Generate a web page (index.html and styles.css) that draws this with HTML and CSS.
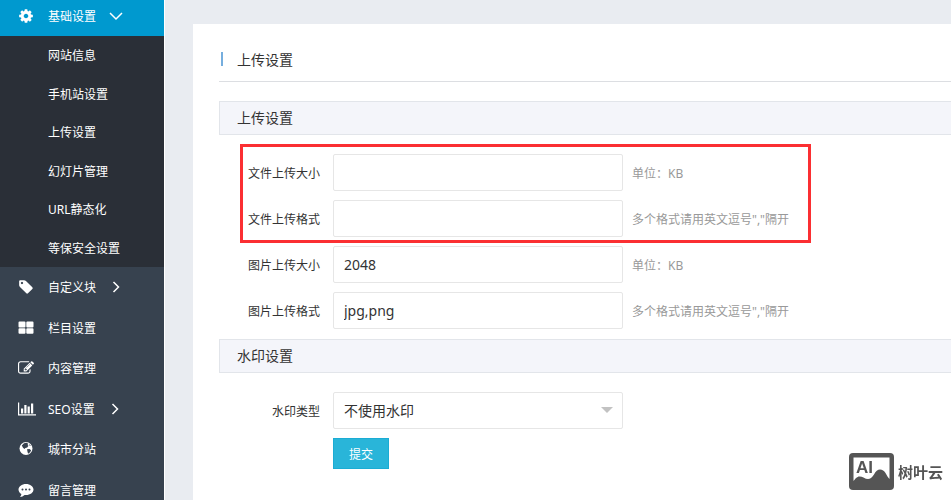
FILE: index.html
```html
<!DOCTYPE html>
<html lang="zh-CN">

<head>
    <meta charset="UTF-8">
    <meta name="viewport" content="width=device-width, initial-scale=1.0">
    <title>上传设置</title>
    <link rel="stylesheet" href="styles.css">
</head>

<body>
    <nav class="sidebar">
        <a class="menu-title active" href="#">
            <svg class="icon" viewBox="0 0 1792 1792"><path d="M1152 896q0-106-75-181t-181-75-181 75-75 181 75 181 181 75 181-75 75-181zm512-109v222q0 12-8 23t-20 13l-185 28q-19 54-39 91 35 50 107 138 10 12 10 25t-9 23q-27 37-99 108t-94 71q-12 0-26-9l-138-108q-44 23-91 38-16 136-29 186-7 28-36 28h-222q-14 0-24.500-8.500t-11.500-21.500l-28-184q-49-16-90-37l-141 107q-10 9-25 9-14 0-25-11-126-114-165-168-7-10-7-23 0-12 8-23 15-21 51-66.500t54-70.500q-27-50-41-99l-183-27q-13-2-21-12.500t-8-23.500v-222q0-12 8-23t19-13l186-28q14-46 39-92-40-57-107-138-10-12-10-24 0-10 9-23 26-36 98.500-107.500t94.500-71.500q13 0 26 10l138 107q44-23 91-38 16-136 29-186 7-28 36-28h222q14 0 24.500 8.500t11.500 21.500l28 184q49 16 90 37l142-107q9-9 24-9 13 0 25 10 129 119 165 170 7 8 7 22 0 12-8 23-15 21-51 66.500t-54 70.500q26 50 41 98l183 28q13 2 21 12.500t8 23.500z"/></svg>
            <span>基础设置</span>
            <svg class="arrow" viewBox="0 0 14 14"><path d="M1 4l6 6 6-6"/></svg>
        </a>
        <ul class="submenu">
            <li><a href="#">网站信息</a></li>
            <li><a href="#">手机站设置</a></li>
            <li><a href="#">上传设置</a></li>
            <li><a href="#">幻灯片管理</a></li>
            <li><a href="#">URL静态化</a></li>
            <li><a href="#">等保安全设置</a></li>
        </ul>
        <ul class="menu">
            <li>
                <a href="#">
                    <svg class="icon" viewBox="0 0 1792 1792"><path d="M576 448q0-53-37.500-90.500t-90.500-37.500-90.500 37.500-37.500 90.500 37.500 90.500 90.500 37.500 90.500-37.500 37.500-90.500zm1067 576q0 53-37 90l-491 492q-39 37-91 37-53 0-90-37l-715-716q-38-37-64.500-101t-26.500-117v-416q0-52 38-90t90-38h416q53 0 117 26.500t102 64.500l715 714q37 39 37 91z"/></svg>
                    <span>自定义块</span>
                    <svg class="arrow" viewBox="0 0 14 14"><path d="M4.500 2l5 5-5 5"/></svg>
                </a>
            </li>
            <li>
                <a href="#">
                    <svg class="icon" viewBox="0 0 16 16"><path d="M1.500 1.500h5q1 0 1 1v4q0 1-1 1h-5q-1 0-1-1v-4q0-1 1-1zM9.300 1.500h5.200q1 0 1 1v4q0 1-1 1H9.300q-1 0-1-1v-4q0-1 1-1zM1.500 8.300h5q1 0 1 1v3.500q0 1-1 1h-5q-1 0-1-1V9.300q0-1 1-1zM9.300 8.300h5.200q1 0 1 1v3.500q0 1-1 1H9.300q-1 0-1-1V9.300q0-1 1-1z"/></svg>
                    <span>栏目设置</span>
                </a>
            </li>
            <li>
                <a href="#">
                    <svg class="icon" viewBox="0 0 1792 1792"><path d="M888 1184l116-116-152-152-116 116v56h96v96h56zm440-720q-16-16-33 1l-350 350q-17 17-1 33t33-1l350-350q17-17 1-33zm80 594v190q0 119-84.500 203.500t-203.500 84.500h-832q-119 0-203.500-84.500t-84.500-203.500v-832q0-119 84.500-203.500t203.500-84.500h832q63 0 117 25 15 7 18 23 3 17-9 29l-49 49q-14 14-32 8-23-6-45-6h-832q-66 0-113 47t-47 113v832q0 66 47 113t113 47h832q66 0 113-47t47-113v-126q0-13 9-22l64-64q15-15 35-7t20 29zm-96-738l288 288-672 672h-288v-288zm444 132l-92 92-288-288 92-92q28-28 68-28t68 28l152 152q28 28 28 68t-28 68z"/></svg>
                    <span>内容管理</span>
                </a>
            </li>
            <li>
                <a href="#">
                    <svg class="icon wide" viewBox="0 0 18 16"><path d="M0 1.500h1.200v11.800H18v1.200H0zM3 7.500h2.200v5H3zM6.300 4h2.200v8.500H6.300zM9.600 5.500h2.200v7H9.600zM13 2.500h2.200v10H13z"/></svg>
                    <span>SEO设置</span>
                    <svg class="arrow" viewBox="0 0 14 14"><path d="M4.500 2l5 5-5 5"/></svg>
                </a>
            </li>
            <li>
                <a href="#">
                    <svg class="icon" viewBox="0 0 16 16"><circle cx="8" cy="7.500" r="6.500"/><path class="land" d="M6 2.200l2.500-.4 1.800 1-.8 1.200 1 .8-1.300 1.700-1.800.4L6.500 8 5 6.800 3.800 4.500zM11 3l1.800 1.500-1 .5zM9 8.200l2.500-.3 1.600 1.300-1 2-2 1.500-.6-2z"/></svg>
                    <span>城市分站</span>
                </a>
            </li>
            <li>
                <a href="#">
                    <svg class="icon" viewBox="0 0 16 16"><path fill-rule="evenodd" d="M8 2c4.200 0 7.500 2.500 7.500 5.500S12.200 13 8 13q-.7 0-1.400-.1Q4.500 14.700 2 14.900q1.300-1.200 1.400-2.900C1.600 11 .5 9.400.5 7.500.5 4.500 3.800 2 8 2zM4.500 6.500a1 1 0 100 2 1 1 0 000-2zM8 6.500a1 1 0 100 2 1 1 0 000-2zM11.500 6.500a1 1 0 100 2 1 1 0 000-2z"/></svg>
                    <span>留言管理</span>
                </a>
            </li>
        </ul>
    </nav>

    <main class="main">
        <div class="panel">
            <h1 class="page-title">上传设置</h1>
            <form>
                <h2 class="section-title">上传设置</h2>
                <div class="fields">
                    <div class="highlight">
                        <div class="row">
                            <label for="fileSize">文件上传大小</label>
                            <input type="text" id="fileSize">
                            <span class="hint">单位：KB</span>
                        </div>
                        <div class="row">
                            <label for="fileType">文件上传格式</label>
                            <input type="text" id="fileType">
                            <span class="hint">多个格式请用英文逗号","隔开</span>
                        </div>
                    </div>
                    <div class="row">
                        <label for="imgSize">图片上传大小</label>
                        <input type="text" id="imgSize" value="2048">
                        <span class="hint">单位：KB</span>
                    </div>
                    <div class="row">
                        <label for="imgType">图片上传格式</label>
                        <input type="text" id="imgType" value="jpg,png">
                        <span class="hint">多个格式请用英文逗号","隔开</span>
                    </div>
                </div>
                <h2 class="section-title">水印设置</h2>
                <div class="fields">
                    <div class="row">
                        <label for="watermark">水印类型</label>
                        <div class="select">
                            <select id="watermark">
                                <option>不使用水印</option>
                            </select>
                        </div>
                    </div>
                    <button type="submit" class="submit">提交</button>
                </div>
            </form>
        </div>
    </main>

    <div class="brand">
        <svg class="brand-icon" viewBox="0 0 45 37">
            <rect width="45" height="37" rx="4" fill="#555"/>
            <path fill="#fff" d="M4.500 4.500h36V26q-2-2-4-6-2-3.500-5.500-3.500T25 21.500q-3 4.500-6 4.500-2 0-4.500-1.500Q12 23 9.500 23.500 7 24 4.500 28z"/>
            <text x="7" y="20">AI</text>
        </svg>
        <span>树叶云</span>
    </div>
</body>

</html>
```

FILE: styles.css
```css
* {
    box-sizing: border-box;
}

body {
    margin: 0;
    display: flex;
    height: 100vh;
    overflow: hidden;
    font-family: "Noto Sans", "Noto Sans CJK SC", sans-serif;
    font-size: 12px;
    color: #333;
    background-color: #e9ecf1;
}

ul {
    margin: 0;
    padding: 0;
    list-style: none;
}

a {
    color: #fff;
    text-decoration: none;
}

/* 左侧菜单 */
.sidebar {
    flex: 0 0 165px;
    overflow: hidden;
    background-color: #37424f;
    border-right: 1px solid #fff;
}

.menu-title,
.menu a {
    display: flex;
    align-items: center;
    height: 100%;
    padding-left: 18px;
}

.sidebar .menu-title {
    height: 36px;
    padding-bottom: 4px;
    background-color: #0099cf;
}

.submenu {
    background-color: #2a2f37;
}

.submenu li {
    height: 38px;
    line-height: 40px;
    padding-left: 48px;
}

.submenu li:nth-child(odd) {
    height: 39px;
}

.menu li {
    height: 40px;
}

.menu li:nth-child(even) {
    height: 41px;
}

.icon {
    width: 16px;
    height: 16px;
    margin-right: 14px;
    fill: #fff;
}

.icon.wide {
    width: 18px;
    margin-right: 12px;
}

.land {
    fill: #37424f;
}

.arrow {
    width: 14px;
    height: 14px;
    margin-left: 13px;
    fill: none;
    stroke: #fff;
    stroke-width: 1.5;
}

/* 右侧内容 */
.main {
    flex: 1;
    min-width: 0;
    padding: 24px 0 0 28px;
}

.panel {
    height: 100%;
    padding: 20px 0 0 26px;
    background-color: #fff;
}

h1,
h2 {
    margin: 0;
    font-size: 14px;
    font-weight: normal;
}

.page-title {
    display: flex;
    align-items: center;
    height: 38px;
    padding: 0 0 8px 2px;
    border-bottom: 1px solid #dcdee2;
}

.page-title::before {
    content: "";
    width: 2px;
    height: 14px;
    margin-right: 14px;
    background-color: #76aede;
}

form {
    padding-top: 19px;
}

.section-title {
    height: 34px;
    padding-left: 17px;
    line-height: 32px;
    background-color: #f4f5fa;
    border: 1px solid #e2e5ea;
    border-right: 0;
}

.fields,
.highlight {
    display: flex;
    flex-direction: column;
    gap: 9px;
}

.fields {
    padding: 19px 0 10px;
}

.highlight {
    position: relative;
}

/* 红色标注框 */
.highlight::after {
    content: "";
    position: absolute;
    top: -10px;
    left: 21px;
    width: 565px;
    bottom: -6px;
    border: 3px solid #fb2f32;
    pointer-events: none;
}

.row {
    display: flex;
    align-items: center;
}

.row label {
    width: 101px;
    margin-right: 13px;
    text-align: right;
}

.row input,
.select {
    width: 290px;
    height: 37px;
}

.row input,
.row select {
    padding: 0 10px;
    border: 1px solid #e6e6e6;
    border-radius: 2px;
    background-color: #fff;
    font-family: inherit;
    font-size: 14px;
    color: #333;
}

.select {
    position: relative;
}

.select select {
    width: 100%;
    height: 100%;
    appearance: none;
}

.select::after {
    content: "";
    position: absolute;
    top: 15px;
    right: 10px;
    border: 6px solid transparent;
    border-top-color: #c2c2c2;
    border-bottom: 0;
    pointer-events: none;
}

.hint {
    margin-left: 9px;
    color: #999;
}

.submit {
    width: 56px;
    height: 31px;
    margin-left: 114px;
    padding: 0;
    border: 1px solid #1bacd4;
    background-color: #29b5d9;
    font-family: inherit;
    font-size: 12px;
    color: #fff;
}

/* 右下角标志 */
.brand {
    position: fixed;
    right: 8px;
    bottom: 10px;
    display: flex;
    align-items: center;
    gap: 4px;
    font-size: 15px;
    line-height: 24px;
    font-weight: bold;
    color: #555;
}

.brand-icon {
    width: 45px;
    height: 37px;
    font-family: "Liberation Sans", Arial, sans-serif;
    font-size: 17px;
    fill: #555;
}
```
